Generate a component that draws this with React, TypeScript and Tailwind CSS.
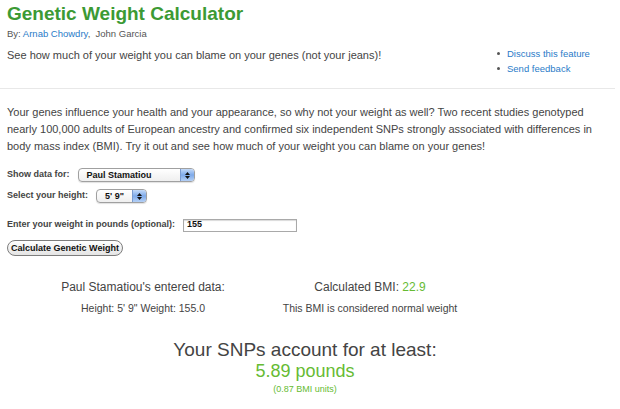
import { ReactNode } from "react";

const font = { fontFamily: '"Liberation Sans", Arial, sans-serif' };

function AquaSelect({ value, width }: { value: string; width: string }) {
  return (
    <div
      className={`flex h-[14px] items-stretch overflow-hidden rounded-[4px] border border-[#a0a0a0] bg-gradient-to-b from-white to-[#efefef] shadow-[0_1px_1px_rgba(0,0,0,0.12)] ${width}`}
    >
      <span className="flex-1 pl-[8px] text-[9px] leading-[12px] font-bold text-[#111]">{value}</span>
      <span className="flex w-[14px] flex-col items-center justify-center gap-[1px] border-l border-[#7a9bd0] bg-gradient-to-b from-[#c4daf8] via-[#7eaaea] to-[#b4d0f6]">
        <svg width="5" height="3" viewBox="0 0 5 3">
          <path d="M0 3 L2.5 0 L5 3 Z" fill="#111" />
        </svg>
        <svg width="5" height="3" viewBox="0 0 5 3">
          <path d="M0 0 L2.5 3 L5 0 Z" fill="#111" />
        </svg>
      </span>
    </div>
  );
}

function Field({ label, className = "", children }: { label: string; className?: string; children: ReactNode }) {
  return (
    <div className={`flex h-[14px] items-center gap-[8px] text-[9px] font-bold text-[#444] ${className}`}>
      <span>{label}</span>
      {children}
    </div>
  );
}

export default function App() {
  return (
    <div className="h-[409px] w-[620px] overflow-hidden bg-white text-[#444]" style={font}>
      <div className="pl-[7px] pt-[3px]">
        <h1 className="text-[19px] leading-[22px] font-bold text-[#3c9a34]">Genetic Weight Calculator</h1>
        <p className="mt-[2px] text-[9.5px] leading-[14px] text-[#555]">
          By: <a className="text-[#2a7bc8]">Arnab Chowdry</a>,&nbsp; John Garcia
        </p>
      </div>

      <div className="mt-[5px] flex pl-[7px]">
        <p className="w-[490px] pt-[2px] text-[11px] leading-[15px] text-[#444]">
          See how much of your weight you can blame on your genes (not your jeans)!
        </p>
        <ul className="text-[9.5px] leading-[15px] text-[#2a7bc8]">
          <li className="flex items-center gap-[7px]">
            <span className="h-[3px] w-[3px] rounded-full bg-[#555]" />
            Discuss this feature
          </li>
          <li className="flex items-center gap-[7px]">
            <span className="h-[3px] w-[3px] rounded-full bg-[#555]" />
            Send feedback
          </li>
        </ul>
      </div>

      <div className="mt-[12px] mr-[5px] h-px bg-[#e8e8e8]" />

      <p className="px-[7px] pt-[15px] text-[11px] leading-[17px] text-[#444]">
        Your genes influence your health and your appearance, so why not your weight as well? Two recent studies
        genotyped nearly 100,000 adults of European ancestry and confirmed six independent SNPs strongly associated
        with differences in body mass index (BMI). Try it out and see how much of your weight you can blame on your
        genes!
      </p>

      <div className="flex flex-col pl-[7px] pt-[13px]">
        <Field label="Show data for:">
          <AquaSelect value="Paul Stamatiou" width="w-[117px]" />
        </Field>
        <Field label="Select your height:" className="mt-[7px]">
          <AquaSelect value={'5\' 9"'} width="w-[51px]" />
        </Field>
        <Field label="Enter your weight in pounds (optional):" className="mt-[15px]">
          <div className="flex h-[13px] w-[114px] items-center border border-[#a9a9a9] pl-[3px] text-[9px] font-bold text-[#111] shadow-[inset_0_1px_1px_rgba(0,0,0,0.15)]">
            155
          </div>
        </Field>
        <button className="mt-[8px] block h-[16px] w-[116px] rounded-full border border-[#7d7d7d] bg-gradient-to-b from-white to-[#e4e4e4] text-[9px] leading-[14px] font-bold text-[#111]">
          Calculate Genetic Weight
        </button>
      </div>

      <div className="flex pt-[24px] text-center">
        <div className="ml-[18px] w-[250px]">
          <p className="text-[12px] leading-[15px] text-[#444]">Paul Stamatiou's entered data:</p>
          <p className="mt-[6px] text-[10.5px] leading-[14px] text-[#444]">Height: 5' 9" Weight: 155.0</p>
        </div>
        <div className="w-[204px]">
          <p className="text-[12px] leading-[15px] text-[#444]">
            Calculated BMI: <span className="text-[#66bb33]">22.9</span>
          </p>
          <p className="mt-[6px] text-[10.5px] leading-[14px] text-[#444]">This BMI is considered normal weight</p>
        </div>
      </div>

      <div className="w-[610px] pt-[24px] text-center">
        <p className="text-[19px] leading-[22px] text-[#444]">Your SNPs account for at least:</p>
        <p className="text-[18px] leading-[20px] text-[#66bb33]">5.89 pounds</p>
        <p className="mt-[3px] text-[9px] leading-[11px] text-[#66bb33]">(0.87 BMI units)</p>
      </div>
    </div>
  );
}
